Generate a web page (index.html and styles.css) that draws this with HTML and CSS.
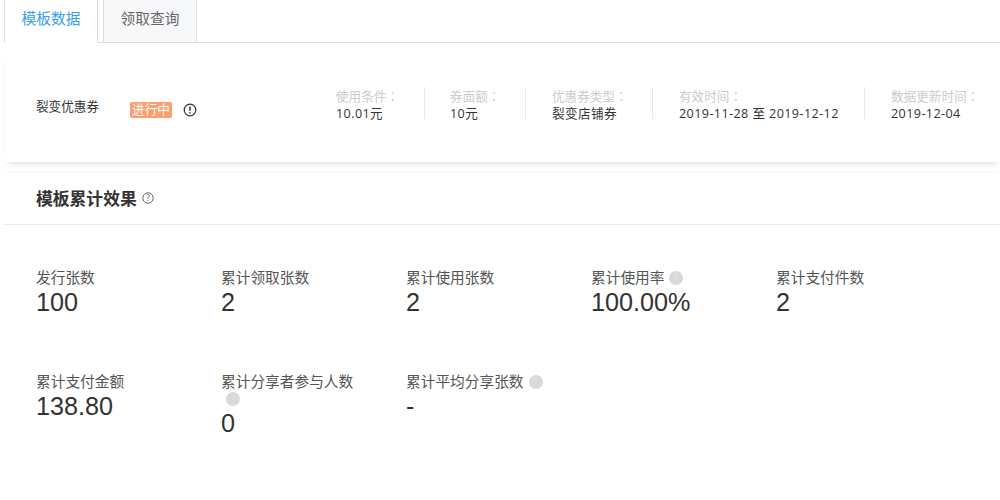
FILE: index.html
```html
<!DOCTYPE html>
<html lang="zh-CN">
<head>
<meta charset="utf-8">
<title>模板数据</title>
<link rel="stylesheet" href="styles.css">
</head>
<body>
<main class="page">
  <nav class="tabs">
    <a class="tab active">模板数据</a>
    <a class="tab">领取查询</a>
  </nav>
  <section class="info">
    <span class="coupon-name">裂变优惠券</span>
    <span class="status">进行中</span>
    <svg class="alert" width="14" height="14" viewBox="0 0 14 14"><circle cx="7" cy="7" r="5.8" fill="none" stroke="#333" stroke-width="1.2"/><path d="M7 3.6v4.2M7 9.2v1.3" stroke="#333" stroke-width="1.5" fill="none"/></svg>
    <div class="meta">
      <div class="meta-item w-a"><span class="meta-label">使用条件<span class="colon" lang="zh-TW">：</span></span><span class="meta-value">10.01元</span></div>
      <div class="meta-item w-b"><span class="meta-label">券面额<span class="colon" lang="zh-TW">：</span></span><span class="meta-value">10元</span></div>
      <div class="meta-item w-c"><span class="meta-label">优惠券类型<span class="colon" lang="zh-TW">：</span></span><span class="meta-value">裂变店铺券</span></div>
      <div class="meta-item w-d"><span class="meta-label">有效时间<span class="colon" lang="zh-TW">：</span></span><span class="meta-value">2019-11-28 至 2019-12-12</span></div>
      <div class="meta-item w-e"><span class="meta-label">数据更新时间<span class="colon" lang="zh-TW">：</span></span><span class="meta-value">2019-12-04</span></div>
    </div>
  </section>
  <section class="effect">
    <header class="effect-head">
      <h2 class="effect-title">模板累计效果</h2>
      <svg class="help" width="12" height="12" viewBox="0 0 12 12"><circle cx="6" cy="6" r="5.2" fill="none" stroke="#666" stroke-width="1"/><text x="6" y="9" text-anchor="middle" class="help-mark">?</text></svg>
    </header>
    <div class="stats">
      <div class="stat"><div class="stat-label">发行张数</div><div class="stat-value">100</div></div>
      <div class="stat"><div class="stat-label">累计领取张数</div><div class="stat-value">2</div></div>
      <div class="stat"><div class="stat-label">累计使用张数</div><div class="stat-value">2</div></div>
      <div class="stat"><div class="stat-label">累计使用率<span class="tip">?</span></div><div class="stat-value">100.00%</div></div>
      <div class="stat"><div class="stat-label">累计支付件数</div><div class="stat-value">2</div></div>
      <div class="stat"><div class="stat-label">累计支付金额</div><div class="stat-value">138.80</div></div>
      <div class="stat"><div class="stat-label">累计分享者参与人数<span class="tip">?</span></div><div class="stat-value">0</div></div>
      <div class="stat"><div class="stat-label">累计平均分享张数<span class="tip">?</span></div><div class="stat-value">-</div></div>
    </div>
  </section>
</main>
</body>
</html>
```

FILE: styles.css
```css
* { box-sizing: border-box; }
html, body { margin: 0; padding: 0; background: #fff; }
body {
  font-family: "Open Sans", "Noto Sans CJK SC", sans-serif;
  color: #333;
  overflow: hidden;
  height: 500px;
}
.page { padding-left: 4px; }
.tabs {
  display: flex;
  height: 43px;
  border-bottom: 1px solid #dcdee2;
  gap: 5px;
}
.tab {
  width: 94px;
  height: 43px;
  font-size: 14.7px;
  line-height: 37px;
  text-align: center;
  color: #666;
  background: #f7f8fa;
  border: 1px solid #dcdee2;
  border-top: 0;
}
.tab.active {
  color: #38a0f0;
  background: #fff;
  border-bottom-color: #fff;
}
.info {
  display: flex;
  align-items: center;
  height: 119px;
  padding: 14px 0 0 32px;
  box-shadow: 0 5px 6px -4px rgba(0,0,0,.16);
}
.coupon-name { width: 94px; font-size: 12.6px; color: #333; margin-top: -8px; }
.status {
  width: 42px;
  height: 16px;
  line-height: 16px;
  font-size: 12.6px;
  text-align: center;
  color: #fff;
  background: #ff9e6c;
  border-radius: 2px;
}
.alert { margin-left: 11px; }
.meta { display: flex; margin: -14px 0 0 139px; }
.meta-item {
  display: flex;
  flex-direction: column;
  height: 32px;
  font-size: 12.6px;
  line-height: 18px;
  border-right: 1px solid #e8e8e8;
  white-space: nowrap;
}
.meta-item:last-child { border-right: 0; }
.w-a { width: 89px; }
.w-b { width: 101px; padding-left: 25px; }
.w-c { width: 127px; padding-left: 26px; }
.w-d { width: 212px; padding-left: 26px; }
.w-e { padding-left: 26px; }
.meta-label { color: #ccc; }
.colon { font-family: "Noto Sans CJK TC", sans-serif; }
.meta-value { color: #333; letter-spacing: .4px; margin-top: -1px; }
.effect { margin-top: 9px; border-top: 1px solid #f7f7f7; }
.effect-head {
  display: flex;
  align-items: center;
  gap: 5px;
  height: 53px;
  padding-left: 32px;
  border-bottom: 1px solid #e8e8e8;
}
.effect-title { margin: 0; font-size: 16.8px; font-weight: 700; color: #333; }
.help-mark { font-size: 9px; fill: #666; }
.stats {
  display: flex;
  flex-wrap: wrap;
  padding: 44px 0 0 32px;
}
.stat { width: 185px; height: 104px; }
.stat-label { font-size: 14.7px; line-height: 17px; color: #555; width: 140px; }
.stat-value { font-family: "Liberation Sans", sans-serif; font-size: 25.2px; line-height: 34px; color: #333; margin-top: -1px; }
.tip {
  display: inline-block;
  width: 14px;
  height: 14px;
  line-height: 14px;
  margin-left: 5px;
  border-radius: 50%;
  background: #d9d9d9;
  color: #e4e4e4;
  font-size: 10px;
  text-align: center;
  vertical-align: 1px;
}
```
